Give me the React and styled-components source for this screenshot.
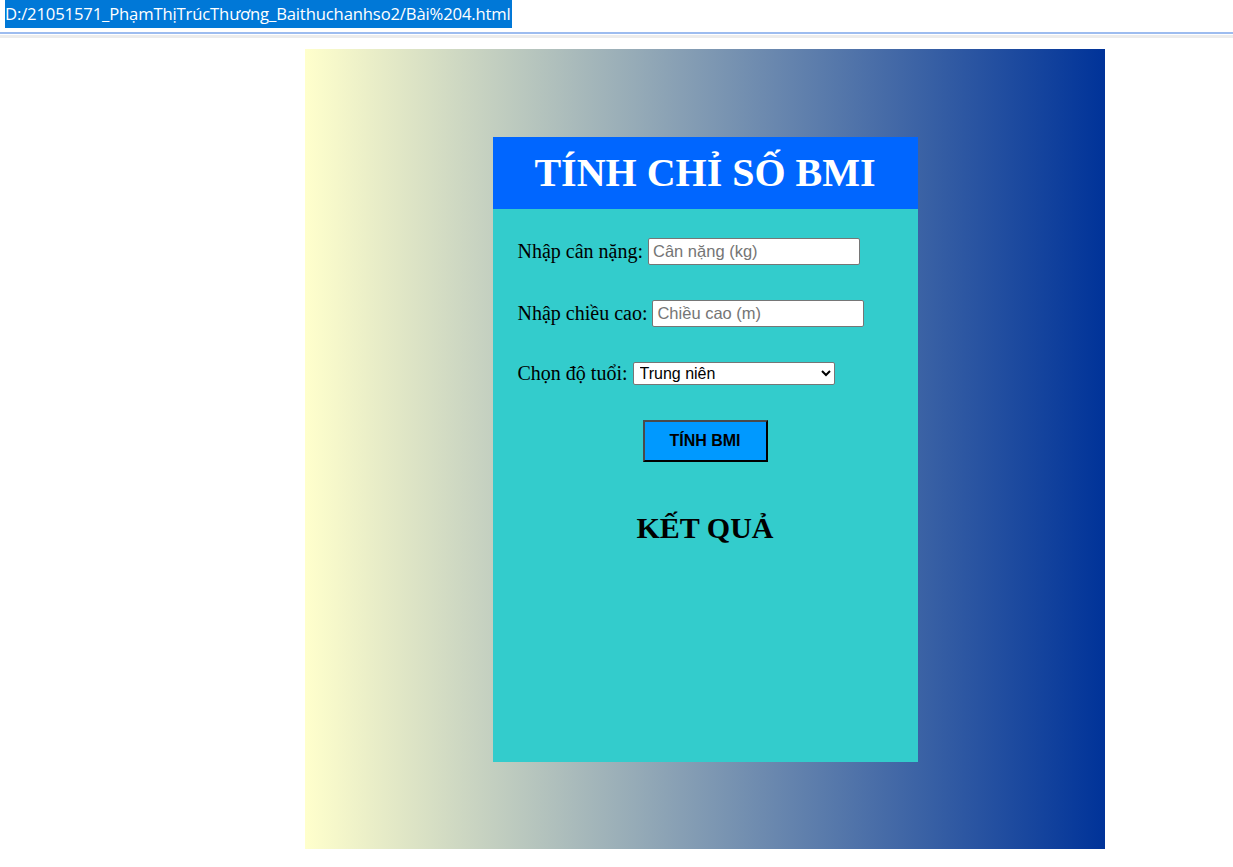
import styled, { createGlobalStyle } from "styled-components";

const GlobalStyle = createGlobalStyle`
  html, body {
    margin: 0;
    padding: 0;
    background: #ffffff;
  }
`;

export default function App() {
  return (
    <Page>
      <GlobalStyle />
      <AddressBar>
        <Selected>D:/21051571_PhạmThịTrúcThương_Baithuchanhso2/Bài%204.html</Selected>
      </AddressBar>
      <BlueRule />
      <GreyRule />

      <Backdrop>
        <Card>
          <Header>TÍNH CHỈ SỐ BMI</Header>
          <Form>
            <Row>
              <Label>Nhập cân nặng:</Label>
              <Field type="text" placeholder="Cân nặng (kg)" />
            </Row>
            <Row>
              <Label>Nhập chiều cao:</Label>
              <Field type="text" placeholder="Chiều cao (m)" />
            </Row>
            <Row $small>
              <Label>Chọn độ tuổi:</Label>
              <Select defaultValue="trung-nien">
                <option value="thieu-nien">Thiếu niên</option>
                <option value="trung-nien">Trung niên</option>
                <option value="cao-tuoi">Cao tuổi</option>
              </Select>
            </Row>
            <ButtonRow>
              <Button type="button">TÍNH BMI</Button>
            </ButtonRow>
            <Result>KẾT QUẢ</Result>
          </Form>
        </Card>
      </Backdrop>
    </Page>
  );
}

const Page = styled.div`
  width: 1233px;
  min-height: 867px;
  background: #ffffff;
`;

const AddressBar = styled.div`
  height: 30px;
  padding-left: 5px;
  display: flex;
  align-items: flex-start;
`;

const Selected = styled.span`
  background: #0078d7;
  color: #ffffff;
  font-family: "Open Sans", "Noto Sans", sans-serif;
  font-size: 16.65px;
  line-height: 28px;
  height: 28px;
  letter-spacing: -0.15px;
  padding-right: 1px;
  white-space: nowrap;
`;

const BlueRule = styled.div`
  margin-top: 2px;
  height: 2px;
  background: #9dbcef;
`;

const GreyRule = styled.div`
  margin-top: 1px;
  height: 3px;
  background: #ececec;
`;

const Backdrop = styled.div`
  margin: 11px 0 0 305px;
  width: 800px;
  height: 800px;
  box-sizing: border-box;
  padding-top: 88px;
  background: linear-gradient(to right, #ffffcc, #003399);
`;

const Card = styled.div`
  width: 425px;
  height: 625px;
  margin: 0 auto;
  background: #33cccc;
  box-sizing: border-box;
`;

const Header = styled.h1`
  margin: 0;
  height: 72px;
  background: #0066ff;
  color: #ffffff;
  font-family: "Liberation Serif", "Times New Roman", serif;
  font-size: 40px;
  font-weight: bold;
  text-align: center;
  line-height: 72px;
`;

const Form = styled.div`
  display: flex;
  flex-direction: column;
  padding: 29px 24px 0 25px;
`;

const Row = styled.div`
  display: flex;
  align-items: center;
  gap: 5px;
  height: ${(p) => (p.$small ? "23px" : "27px")};
  margin-bottom: 35px;
`;

const Label = styled.span`
  font-family: "Liberation Serif", "Times New Roman", serif;
  font-size: 20px;
  color: #000000;
  line-height: 1;
  margin-top: -2px;
`;

const Field = styled.input`
  width: 212px;
  height: 27px;
  box-sizing: border-box;
  border: 1px solid #767676;
  border-radius: 2px;
  padding: 0 4px;
  background: #ffffff;
  font-family: "Liberation Sans", Arial, sans-serif;
  font-size: 16.5px;
  color: #000000;
  outline: none;

  &::placeholder {
    color: #757575;
  }
`;

const Select = styled.select`
  width: 202px;
  height: 23px;
  box-sizing: border-box;
  border: 1px solid #767676;
  border-radius: 2px;
  background: #ffffff;
  font-family: "Liberation Sans", Arial, sans-serif;
  font-size: 16px;
  color: #000000;
  padding: 0 2px;
`;

const ButtonRow = styled.div`
  display: flex;
  justify-content: center;
  padding-right: 1px;
`;

const Button = styled.button`
  width: 125px;
  height: 42px;
  box-sizing: border-box;
  background: #0099ff;
  border-width: 2px;
  border-style: solid;
  border-color: #4a4a4a #000000 #000000 #4a4a4a;
  font-family: "Liberation Sans", Arial, sans-serif;
  font-size: 16px;
  font-weight: bold;
  color: #000000;
  padding: 0;
  cursor: pointer;
`;

const Result = styled.h2`
  margin: 49px 0 0;
  padding-right: 1px;
  font-family: "Liberation Serif", "Times New Roman", serif;
  font-size: 30px;
  font-weight: bold;
  text-align: center;
  color: #000000;
`;
